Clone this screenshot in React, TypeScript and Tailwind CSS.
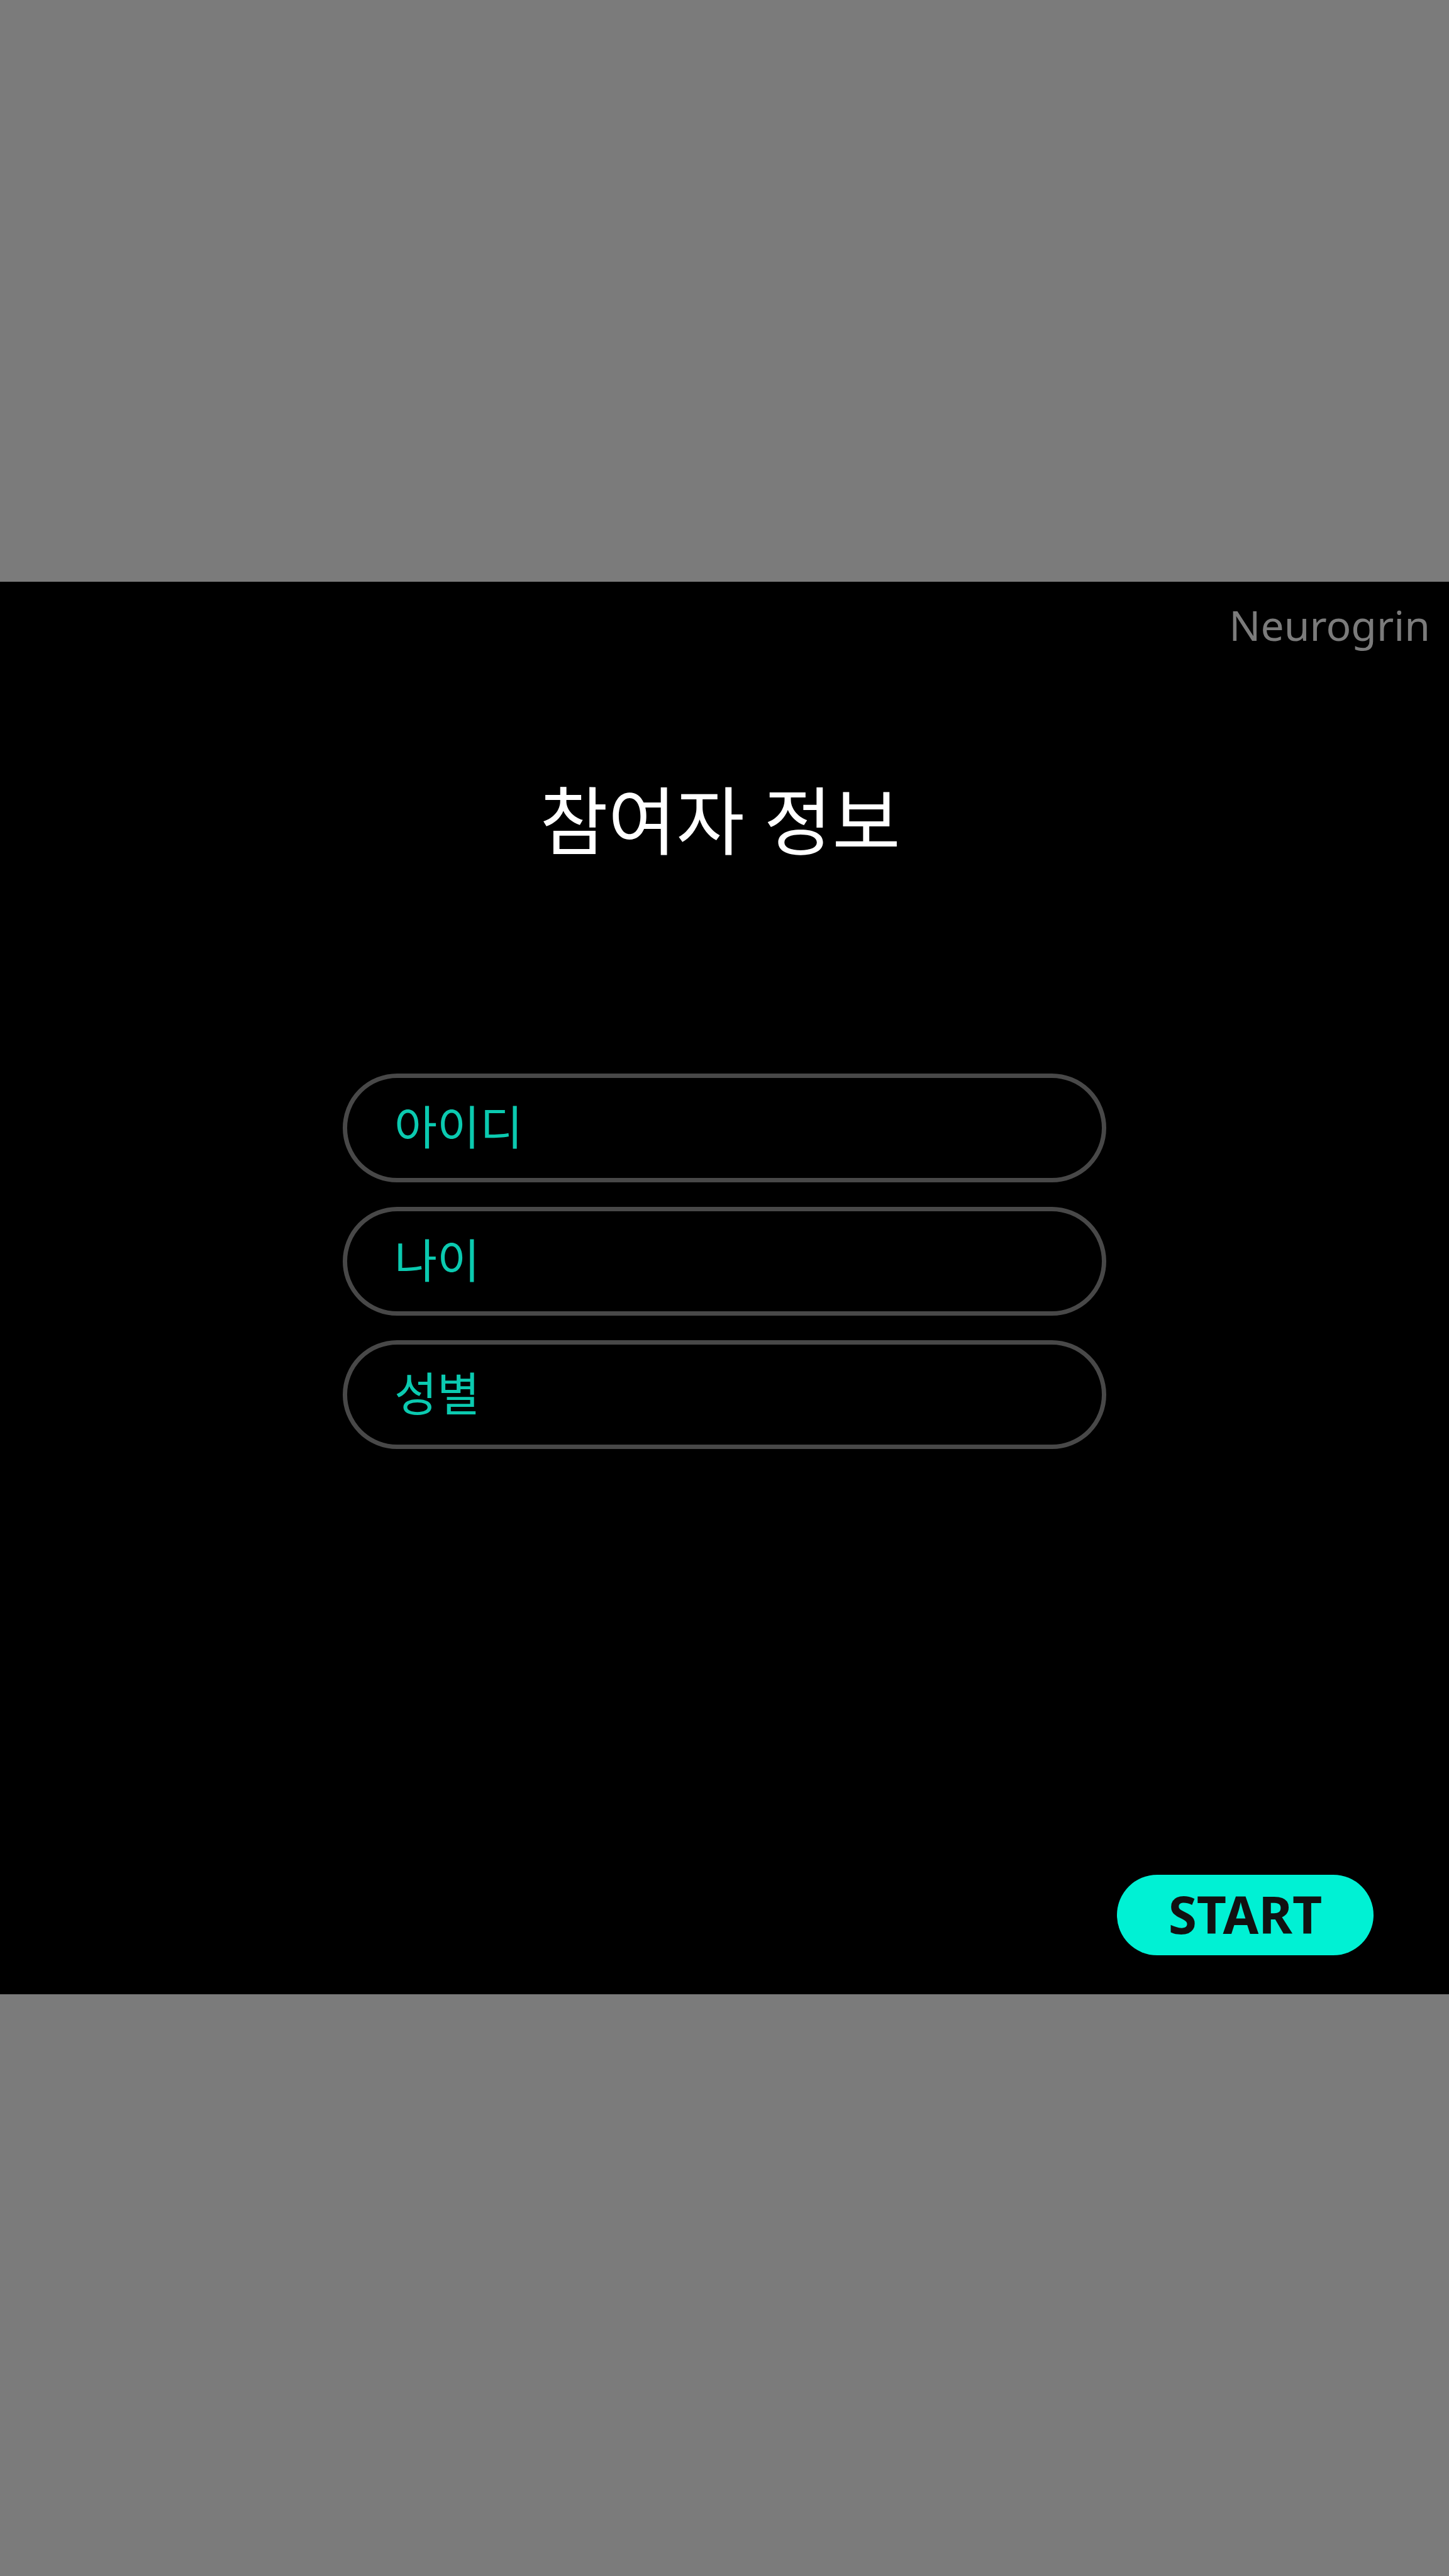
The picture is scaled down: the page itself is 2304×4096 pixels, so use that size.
const fields = [
  { name: 'id', label: '아이디' },
  { name: 'age', label: '나이' },
  { name: 'gender', label: '성별' },
];

export default function App() {
  return (
    <main className="flex min-h-screen flex-col justify-center bg-[#7b7b7b] font-['Noto_Sans','Noto_Sans_CJK_KR',sans-serif]">
      <section className="flex flex-col bg-black">
        <header className="flex justify-end px-[30px] pt-5">
          <p className="text-[66px] leading-[96px] text-[#7b7b7b]">Neurogrin</p>
        </header>
        <h1 className="mt-[184px] pr-[14px] text-center text-[118px] leading-[160px] text-white">참여자 정보</h1>
        <form className="flex flex-col">
          <div className="mx-auto mt-[322px] flex w-full max-w-[1214px] flex-col gap-[39px]">
            {fields.map((field) => (
              <input
                key={field.name}
                name={field.name}
                type="text"
                aria-label={field.label}
                placeholder={field.label}
                className="h-[173px] w-full rounded-full border-[7px] border-[#484848] bg-black px-[75px] pb-1 text-[74px] text-[#0bcab0] placeholder:text-[#0bcab0] placeholder:opacity-100"
              />
            ))}
          </div>
          <div className="mt-[677px] flex justify-end pr-[120px] pb-[62px]">
            <button
              type="submit"
              className="h-32 w-[408px] rounded-full bg-[#00f1d4] pb-1 text-[82px] leading-none font-bold text-[#111111]"
            >
              START
            </button>
          </div>
        </form>
      </section>
    </main>
  );
}
